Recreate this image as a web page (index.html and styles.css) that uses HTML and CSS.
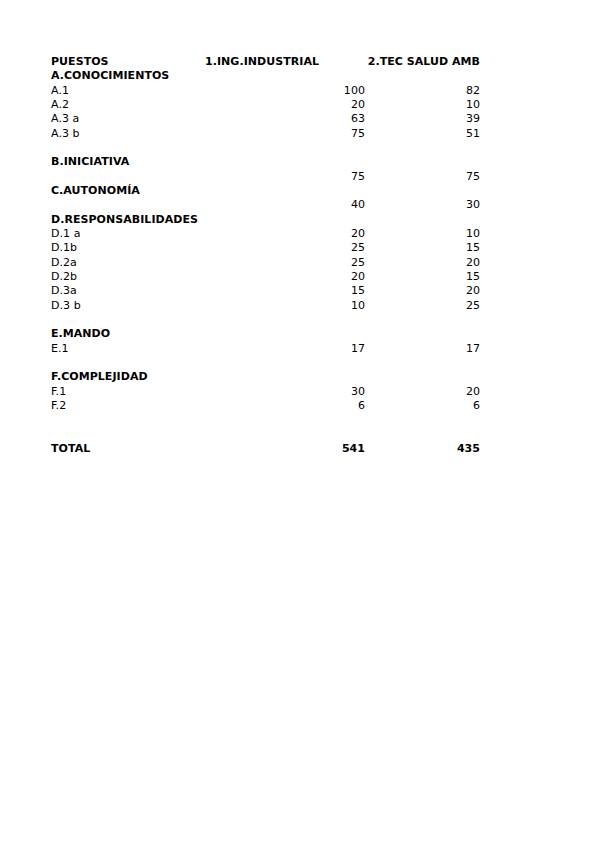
FILE: index.html
```html
<!DOCTYPE html>
<html>
<head>
<meta charset="utf-8">
<link rel="stylesheet" href="styles.css">
</head>
<body>
<div class="sheet">
  <div class="row b"><span>PUESTOS</span><span class="h2">1.ING.INDUSTRIAL</span><span class="n">2.TEC SALUD AMB</span></div>
  <div class="row b"><span>A.CONOCIMIENTOS</span><span></span><span></span></div>
  <div class="row"><span>A.1</span><span class="n">100</span><span class="n">82</span></div>
  <div class="row"><span>A.2</span><span class="n">20</span><span class="n">10</span></div>
  <div class="row"><span>A.3 a</span><span class="n">63</span><span class="n">39</span></div>
  <div class="row"><span>A.3 b</span><span class="n">75</span><span class="n">51</span></div>
  <div class="row"><span></span><span></span><span></span></div>
  <div class="row b"><span>B.INICIATIVA</span><span></span><span></span></div>
  <div class="row"><span></span><span class="n">75</span><span class="n">75</span></div>
  <div class="row b"><span>C.AUTONOMÍA</span><span></span><span></span></div>
  <div class="row"><span></span><span class="n">40</span><span class="n">30</span></div>
  <div class="row b"><span>D.RESPONSABILIDADES</span><span></span><span></span></div>
  <div class="row"><span>D.1 a</span><span class="n">20</span><span class="n">10</span></div>
  <div class="row"><span>D.1b</span><span class="n">25</span><span class="n">15</span></div>
  <div class="row"><span>D.2a</span><span class="n">25</span><span class="n">20</span></div>
  <div class="row"><span>D.2b</span><span class="n">20</span><span class="n">15</span></div>
  <div class="row"><span>D.3a</span><span class="n">15</span><span class="n">20</span></div>
  <div class="row"><span>D.3 b</span><span class="n">10</span><span class="n">25</span></div>
  <div class="row"><span></span><span></span><span></span></div>
  <div class="row b"><span>E.MANDO</span><span></span><span></span></div>
  <div class="row"><span>E.1</span><span class="n">17</span><span class="n">17</span></div>
  <div class="row"><span></span><span></span><span></span></div>
  <div class="row b"><span>F.COMPLEJIDAD</span><span></span><span></span></div>
  <div class="row"><span>F.1</span><span class="n">30</span><span class="n">20</span></div>
  <div class="row"><span>F.2</span><span class="n">6</span><span class="n">6</span></div>
  <div class="row"><span></span><span></span><span></span></div>
  <div class="row"><span></span><span></span><span></span></div>
  <div class="row b"><span>TOTAL</span><span class="n">541</span><span class="n">435</span></div>
</div>
</body>
</html>
```
FILE: styles.css
```css
html, body {
  margin: 0;
  padding: 0;
  background: #ffffff;
}
body {
  padding: 55px 0 0 51px;
  font-family: "DejaVu Sans", sans-serif;
  font-size: 11px;
  color: #000000;
  letter-spacing: 0.05px;
}
.sheet {
  display: grid;
  width: 429px;
}
.row {
  display: grid;
  grid-template-columns: 154px 160px 115px;
  height: 14.33px;
  line-height: 14.33px;
  white-space: nowrap;
}
.row.b {
  font-weight: bold;
}
.n {
  text-align: right;
}
.h2 {
  text-align: left;
}
```
